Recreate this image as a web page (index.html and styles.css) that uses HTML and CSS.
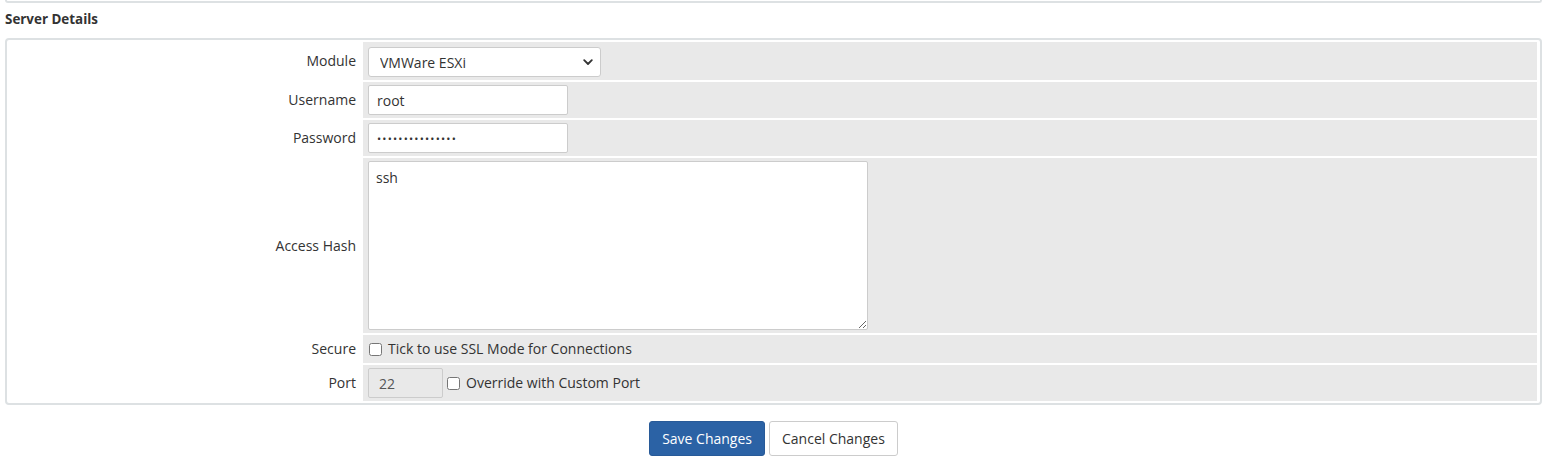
FILE: index.html
```html
<!DOCTYPE html>
<html>
<head>
<meta charset="utf-8">
<link rel="stylesheet" href="styles.css">
</head>
<body>
<div class="page">
  <div class="prev-box"></div>
  <h2 class="section-title">Server Details</h2>
  <div class="panel">
    <table class="form">
      <tr class="row-module">
        <td class="label">Module</td>
        <td class="field">
          <div class="select-wrap">
            <select class="select"><option>VMWare ESXi</option></select>
            <svg class="chev" width="10" height="7" viewBox="0 0 10 7"><path d="M1.2 1.2 L5 5 L8.8 1.2" fill="none" stroke="#333" stroke-width="1.8" stroke-linecap="round" stroke-linejoin="round"/></svg>
          </div>
        </td>
      </tr>
      <tr>
        <td class="label">Username</td>
        <td class="field"><input class="input" type="text" value="root"></td>
      </tr>
      <tr>
        <td class="label">Password</td>
        <td class="field"><input class="input pw" type="password" value="xxxxxxxxxxxxxxx"></td>
      </tr>
      <tr>
        <td class="label">Access Hash</td>
        <td class="field"><textarea class="textarea">ssh</textarea></td>
      </tr>
      <tr class="row-check">
        <td class="label">Secure</td>
        <td class="field"><label class="check"><input type="checkbox"> Tick to use SSL Mode for Connections</label></td>
      </tr>
      <tr>
        <td class="label">Port</td>
        <td class="field"><div class="inline"><input class="input port" type="text" value="22" disabled><label class="check"><input type="checkbox"> Override with Custom Port</label></div></td>
      </tr>
    </table>
  </div>
  <div class="actions">
    <button class="btn btn-primary">Save Changes</button>
    <button class="btn btn-default">Cancel Changes</button>
  </div>
</div>
</body>
</html>
```

FILE: styles.css
```css
html, body {
  margin: 0;
  padding: 0;
  background: #fff;
}
body {
  font-family: "Open Sans", "Liberation Sans", sans-serif;
  font-size: 14px;
  color: #333;
}
.page {
  padding: 0 8px 0 5px;
}
.prev-box {
  height: 1px;
  border: 2px solid #dde1e3;
  border-top: none;
  border-radius: 0 0 4px 4px;
}
.section-title {
  font-size: 13.4px;
  font-weight: 700;
  line-height: 18px;
  margin: 7px 0 10px 0;
  color: #333;
}
.panel {
  border: 2px solid #dde1e3;
  border-radius: 4px;
  padding: 0 1px 0 1px;
}
.form {
  width: 100%;
  border-collapse: separate;
  border-spacing: 2px;
}
.form td {
  padding: 3px 5px;
  vertical-align: middle;
}
.label {
  width: 341px;
  text-align: right;
  background: #fff;
  line-height: 20px;
}
.field {
  background: #e9e9e9;
}
.row-module .field {
  padding-top: 5px;
  padding-bottom: 3px;
}
.select-wrap {
  position: relative;
  display: inline-block;
  vertical-align: middle;
}
.select {
  appearance: none;
  -webkit-appearance: none;
  width: 233px;
  height: 30px;
  border: 1px solid #ccc;
  border-radius: 3px;
  background: #fff;
  font-family: "Open Sans", "Liberation Sans", sans-serif;
  font-size: 14px;
  color: #333;
  padding: 0 10px 0 11px;
  display: block;
}
.chev {
  position: absolute;
  right: 8px;
  top: 12px;
  pointer-events: none;
}
.input {
  width: 200px;
  height: 30px;
  box-sizing: border-box;
  border: 1px solid #ccc;
  border-radius: 2px;
  background: #fff;
  font-family: "Open Sans", "Liberation Sans", sans-serif;
  font-size: 14px;
  color: #333;
  padding: 0 8px;
  display: block;
  outline: none;
}
.pw {
  font-size: 11px;
  letter-spacing: 1.2px;
}
.port {
  width: 75px;
  background: #e9e9e9;
  color: #555;
  padding: 0 10px;
  margin-right: 3px;
}
.textarea {
  display: block;
  width: 500px;
  height: 169px;
  box-sizing: border-box;
  border: 1px solid #ccc;
  border-radius: 2px;
  font-family: "Open Sans", "Liberation Sans", sans-serif;
  font-size: 14px;
  color: #333;
  padding: 6px 7px;
  resize: both;
}
.row-check .field {
  padding-top: 3px;
  padding-bottom: 3px;
}
.check {
  display: inline-flex;
  align-items: center;
  line-height: 22px;
  color: #333;
}
.check input {
  width: 13px;
  height: 13px;
  margin: 0 6px 0 1px;
}
.inline {
  display: flex;
  align-items: center;
}
.actions {
  display: flex;
  justify-content: center;
  gap: 4px;
  margin-top: 16px;
}
.btn {
  font-family: "Open Sans", "Liberation Sans", sans-serif;
  font-size: 14px;
  height: 35px;
  padding: 0 12px;
  border-radius: 3px;
  border: 1px solid;
  line-height: 20px;
}
.btn-primary {
  background: #2b62a5;
  border-color: #285a98;
  color: #fff;
}
.btn-default {
  background: #fff;
  border-color: #ccc;
  color: #333;
}
```
